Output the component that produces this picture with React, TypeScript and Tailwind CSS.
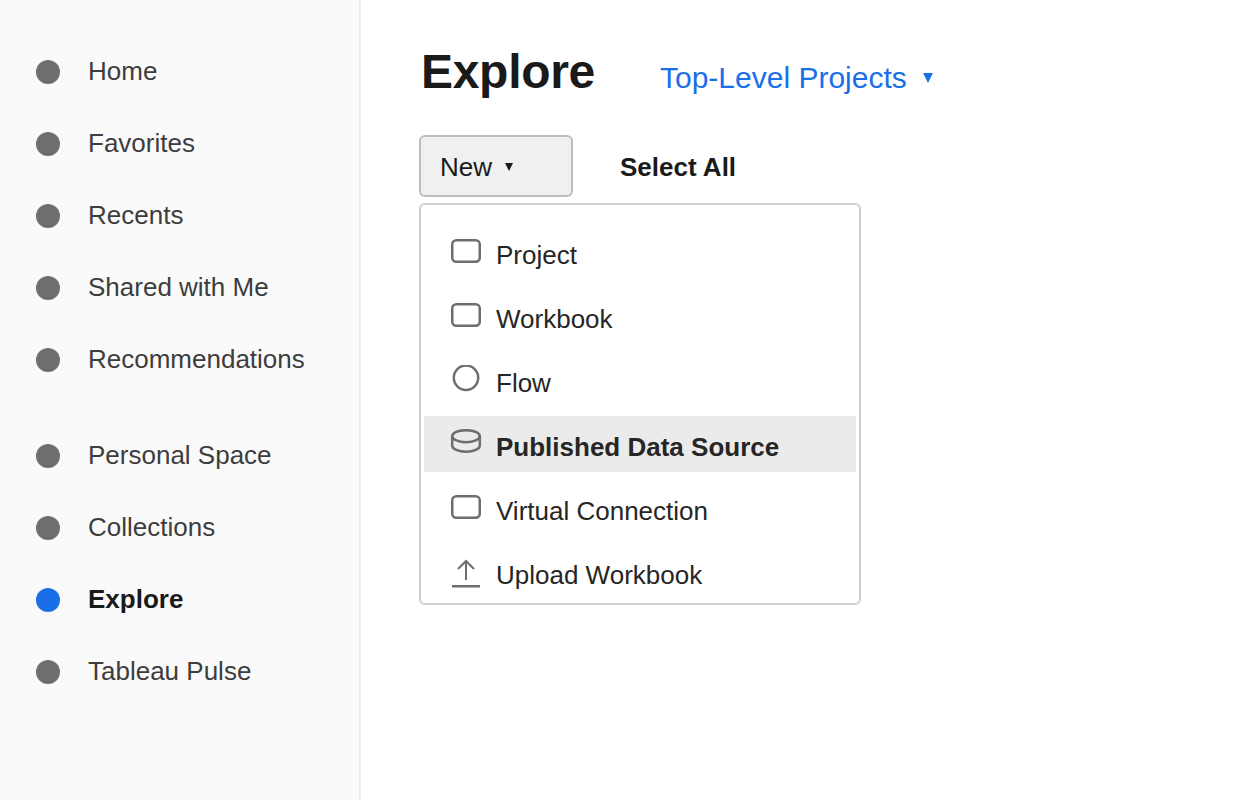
const primaryNav = ["Home", "Favorites", "Recents", "Shared with Me", "Recommendations"]
const secondaryNav = ["Personal Space", "Collections", "Explore", "Tableau Pulse"]

function RectIcon() {
  return (
    <svg width="32" height="28" viewBox="0 0 32 28" fill="none" stroke="#6e6e6e" strokeWidth="2.5">
      <rect x="2.25" y="3.25" width="27.5" height="21.5" rx="4" />
    </svg>
  )
}

function CircleIcon() {
  return (
    <svg width="32" height="28" viewBox="0 0 32 28" fill="none" stroke="#6e6e6e" strokeWidth="2.5">
      <circle cx="16" cy="12.7" r="12.2" />
    </svg>
  )
}

function DatabaseIcon() {
  return (
    <svg width="32" height="28" viewBox="0 0 32 28" fill="none" stroke="#6e6e6e" strokeWidth="2.5">
      <ellipse cx="16" cy="7.2" rx="13.8" ry="6" />
      <path d="M2.2 7.2v9.2c0 3.6 6.2 6.4 13.8 6.4s13.8-2.8 13.8-6.4V7.2" />
    </svg>
  )
}

function UploadIcon() {
  return (
    <svg width="32" height="28" viewBox="0 0 32 28" fill="none" stroke="#6e6e6e" strokeWidth="2" className="overflow-visible">
      <path d="M16 23V4M8 12l8-8 8 8" />
      <path strokeWidth="2.5" d="M2 29.25h28" />
    </svg>
  )
}

const menuItems = [
  { label: "Project", icon: <RectIcon /> },
  { label: "Workbook", icon: <RectIcon /> },
  { label: "Flow", icon: <CircleIcon /> },
  { label: "Published Data Source", icon: <DatabaseIcon />, active: true },
  { label: "Virtual Connection", icon: <RectIcon /> },
  { label: "Upload Workbook", icon: <UploadIcon /> },
]

function NavItem({ label }: { label: string }) {
  const active = label === "Explore"
  return (
    <div className="flex h-[72px] items-center pl-9">
      <span className={`h-6 w-6 rounded-full ${active ? "bg-[#1a6fe8]" : "bg-[#6e6e6e]"}`} />
      <span className={`ml-7 pb-[2px] text-[26px] ${active ? "font-bold text-[#1a1a1a]" : "text-[#3d3d3d]"}`}>{label}</span>
    </div>
  )
}

export default function App() {
  return (
    <div className="flex h-[800px] w-[1240px] overflow-hidden bg-white font-['Liberation_Sans',Arial,sans-serif]">
      <aside className="w-[361px] shrink-0 border-r-2 border-[#ececec] bg-[#fafafa] pt-9">
        {primaryNav.map((item) => (
          <NavItem key={item} label={item} />
        ))}
        <div className="h-6" />
        {secondaryNav.map((item) => (
          <NavItem key={item} label={item} />
        ))}
      </aside>

      <main className="flex-1 pl-[58px] pt-10">
        <div className="flex h-[60px] items-center pl-[2px]">
          <h1 className="pt-1 text-5xl font-bold tracking-[-0.3px] text-[#1a1a1a]">Explore</h1>
          <button className="ml-[65px] mt-[14px] flex items-center text-[30px] text-[#1a6fe8]">
            Top-Level Projects
            <span className="ml-4 mt-[1px] h-0 w-0 border-x-[5px] border-t-[10px] border-x-transparent border-t-[#1a6fe8]" />
          </button>
        </div>

        <div className="mt-[35px] flex items-center">
          <button className="flex h-[62px] w-[154px] items-center rounded-md border-2 border-[#bdbdbd] bg-[#f0f0f0] pl-[19px] pt-[2px] text-[26px] text-[#1a1a1a]">
            New
            <span className="ml-[13px] h-0 w-0 border-x-[4.5px] border-t-[8.5px] border-x-transparent border-t-[#1a1a1a]" />
          </button>
          <button className="ml-[47px] pt-[2px] text-[26px] font-bold text-[#1a1a1a]">Select All</button>
        </div>

        <div className="mt-[6px] flex h-[402px] w-[442px] flex-col gap-2 overflow-hidden rounded-md border-2 border-[#cfcfcf] bg-white px-[3px] pt-[19px]">
          {menuItems.map((item) => (
            <div
              key={item.label}
              className={`flex h-14 shrink-0 items-center pl-[26px] ${item.active ? "bg-[#ebebeb]" : ""}`}
            >
              <span className="-mt-[2px]">{item.icon}</span>
              <span className={`ml-[14px] pt-[6px] text-[26px] text-[#262626] ${item.active ? "font-bold" : ""}`}>{item.label}</span>
            </div>
          ))}
        </div>
      </main>
    </div>
  )
}
